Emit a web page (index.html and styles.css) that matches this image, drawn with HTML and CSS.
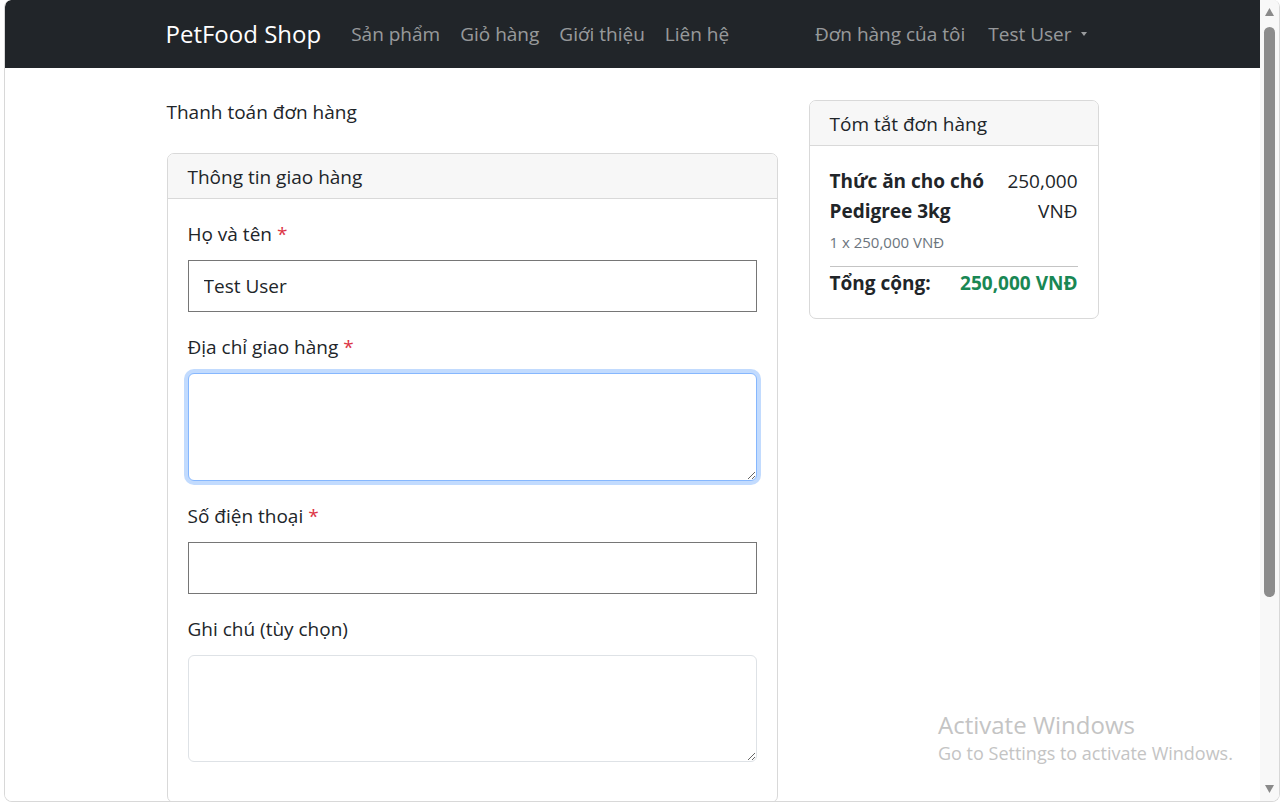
FILE: index.html
```html
<!DOCTYPE html>
<html lang="vi">
<head>
<meta charset="utf-8">
<title>Thanh toán - PetFood Shop</title>
<link rel="stylesheet" href="styles.css">
</head>
<body>
<div class="window">
  <div class="viewport">
    <nav class="navbar">
      <div class="nav-container">
        <a class="brand" href="#">PetFood Shop</a>
        <ul class="nav-links">
          <li>Sản phẩm</li>
          <li>Giỏ hàng</li>
          <li>Giới thiệu</li>
          <li>Liên hệ</li>
        </ul>
        <ul class="nav-links nav-right">
          <li>Đơn hàng của tôi</li>
          <li class="dropdown">Test User<span class="caret"></span></li>
        </ul>
      </div>
    </nav>

    <main class="container">
      <section class="col-main">
        <h1 class="page-title">Thanh toán đơn hàng</h1>
        <div class="card">
          <div class="card-header">Thông tin giao hàng</div>
          <form class="card-body">
            <div class="field">
              <label class="label">Họ và tên <span class="req">*</span></label>
              <input class="plain-input" type="text" value="Test User">
            </div>
            <div class="field">
              <label class="label">Địa chỉ giao hàng <span class="req">*</span></label>
              <textarea class="textarea focused"></textarea>
            </div>
            <div class="field">
              <label class="label">Số điện thoại <span class="req">*</span></label>
              <input class="plain-input" type="text" value="">
            </div>
            <div class="field field-last">
              <label class="label">Ghi chú (tùy chọn)</label>
              <textarea class="textarea"></textarea>
            </div>
          </form>
        </div>
      </section>

      <aside class="col-side">
        <div class="card">
          <div class="card-header">Tóm tắt đơn hàng</div>
          <div class="card-body summary-body">
            <div class="item">
              <div class="item-name">Thức ăn cho chó Pedigree 3kg</div>
              <div class="item-price">250,000 VNĐ</div>
            </div>
            <div class="item-qty">1 x 250,000 VNĐ</div>
            <hr class="divider">
            <div class="total">
              <span>Tổng cộng:</span>
              <span class="total-amount">250,000 VNĐ</span>
            </div>
          </div>
        </div>
      </aside>
    </main>

    <div class="watermark">
      <div class="wm-title">Activate Windows</div>
      <div class="wm-sub">Go to Settings to activate Windows.</div>
    </div>
  </div>

  <div class="scrollbar">
    <svg class="arrow" width="9" height="8" viewBox="0 0 9 8"><polygon points="4.5,0 9,8 0,8" fill="#8a8a8a"/></svg>
    <div class="thumb"></div>
    <div class="spacer"></div>
    <svg class="arrow" width="9" height="8" viewBox="0 0 9 8"><polygon points="0,0 9,0 4.5,8" fill="#8a8a8a"/></svg>
  </div>
</div>
</body>
</html>
```

FILE: styles.css
```css
html, body {
  margin: 0;
  padding: 0;
  background: #fff;
}

body {
  font-family: "Open Sans", "Noto Sans", sans-serif;
  font-size: 19px;
  line-height: 30px;
  color: #212529;
}

.window {
  box-sizing: border-box;
  margin-left: 4px;
  width: 1276px;
  height: 802px;
  display: flex;
  border: 1px solid #d8d8d8;
  border-top: none;
  border-radius: 7px 7px 8px 8px;
  overflow: hidden;
}

.viewport {
  position: relative;
  flex: 1;
  height: 801px;
  overflow: hidden;
  background: #fff;
}

/* Navbar */
.navbar {
  height: 68px;
  background: #212529;
  display: flex;
  align-items: center;
  border-top-left-radius: 6px;
}

.nav-container {
  width: 934px;
  margin: 0 auto;
  display: flex;
  align-items: center;
}

.brand {
  font-size: 24px;
  color: #fff;
  text-decoration: none;
  margin-right: 30px;
  line-height: 36px;
}

.nav-links {
  display: flex;
  gap: 20px;
  list-style: none;
  margin: 0;
  padding: 0;
  color: rgba(255, 255, 255, 0.55);
}

.nav-right {
  margin-left: auto;
  gap: 23px;
  padding-right: 13px;
}

.caret {
  display: inline-block;
  width: 0;
  height: 0;
  margin-left: 9px;
  vertical-align: 5px;
  border-top: 4px solid rgba(255, 255, 255, 0.55);
  border-left: 3.5px solid transparent;
  border-right: 3.5px solid transparent;
}

/* Layout */
.container {
  width: 932px;
  margin: 0 auto;
  padding-top: 29px;
  display: grid;
  grid-template-columns: 611px 290px;
  column-gap: 31px;
  align-items: start;
}

.page-title {
  margin: 0 0 26px;
  font-size: 19px;
  font-weight: 400;
  line-height: 30px;
}

.col-side {
  margin-top: 3px;
}

/* Cards */
.card {
  border: 1px solid #d9d9d9;
  border-radius: 7px;
  background: #fff;
  overflow: hidden;
}

.card-header {
  background: #f7f7f7;
  border-bottom: 1px solid #d9d9d9;
  padding: 8px 20px 6px;
  line-height: 30px;
}

.card-body {
  padding: 20px;
  margin: 0;
}

.field + .field {
  margin-top: 20px;
}

.field-last {
  margin-bottom: 20px;
}

.label {
  display: block;
  margin-bottom: 11px;
}

.req {
  color: #dc3545;
}

.plain-input {
  display: block;
  box-sizing: border-box;
  width: 100%;
  height: 52px;
  margin: 0;
  padding: 0 15px;
  border: 1px solid #767676;
  border-radius: 0;
  font: inherit;
  color: #212529;
  background: #fff;
  outline: none;
}

.textarea {
  display: block;
  box-sizing: border-box;
  width: 100%;
  height: 107px;
  margin: 0;
  padding: 8px 15px;
  border: 1px solid #dee2e6;
  border-radius: 6px;
  font: inherit;
  color: #212529;
  background: #fff;
  resize: vertical;
  outline: none;
}

.focused {
  height: 108px;
  border-color: #86b7fe;
  box-shadow: 0 0 0 4px rgba(13, 110, 253, 0.25);
}

/* Summary */
.summary-body {
  padding: 20px;
}

.item {
  display: flex;
  justify-content: space-between;
}

.item-name {
  width: 165px;
  font-weight: 700;
}

.item-price {
  width: 80px;
  text-align: right;
}

.item-qty {
  margin-top: 5px;
  font-size: 15px;
  line-height: 22px;
  color: #6c757d;
}

.divider {
  margin: 13px 0 0;
  border: 0;
  border-top: 1px solid #c4c4c4;
  height: 0;
}

.total {
  display: flex;
  justify-content: space-between;
  font-weight: 700;
  padding-top: 1px;
}

.total-amount {
  color: #198754;
}

/* Watermark overlay */
.watermark {
  position: absolute;
  left: 933px;
  top: 709px;
  color: #c4c4c4;
  pointer-events: none;
}

.wm-title {
  font-size: 24px;
  line-height: 32px;
}

.wm-sub {
  font-size: 18px;
  line-height: 24px;
}

/* Scrollbar */
.scrollbar {
  width: 19px;
  height: 801px;
  box-sizing: border-box;
  padding: 8px 0;
  background: #f8f8f8;
  display: flex;
  flex-direction: column;
  align-items: center;
}

.arrow {
  display: block;
  flex: none;
}

.thumb {
  flex: none;
  margin-top: 11px;
  width: 11px;
  height: 570px;
  border-radius: 6px;
  background: #8c8c8c;
}

.spacer {
  flex: 1;
}
```
